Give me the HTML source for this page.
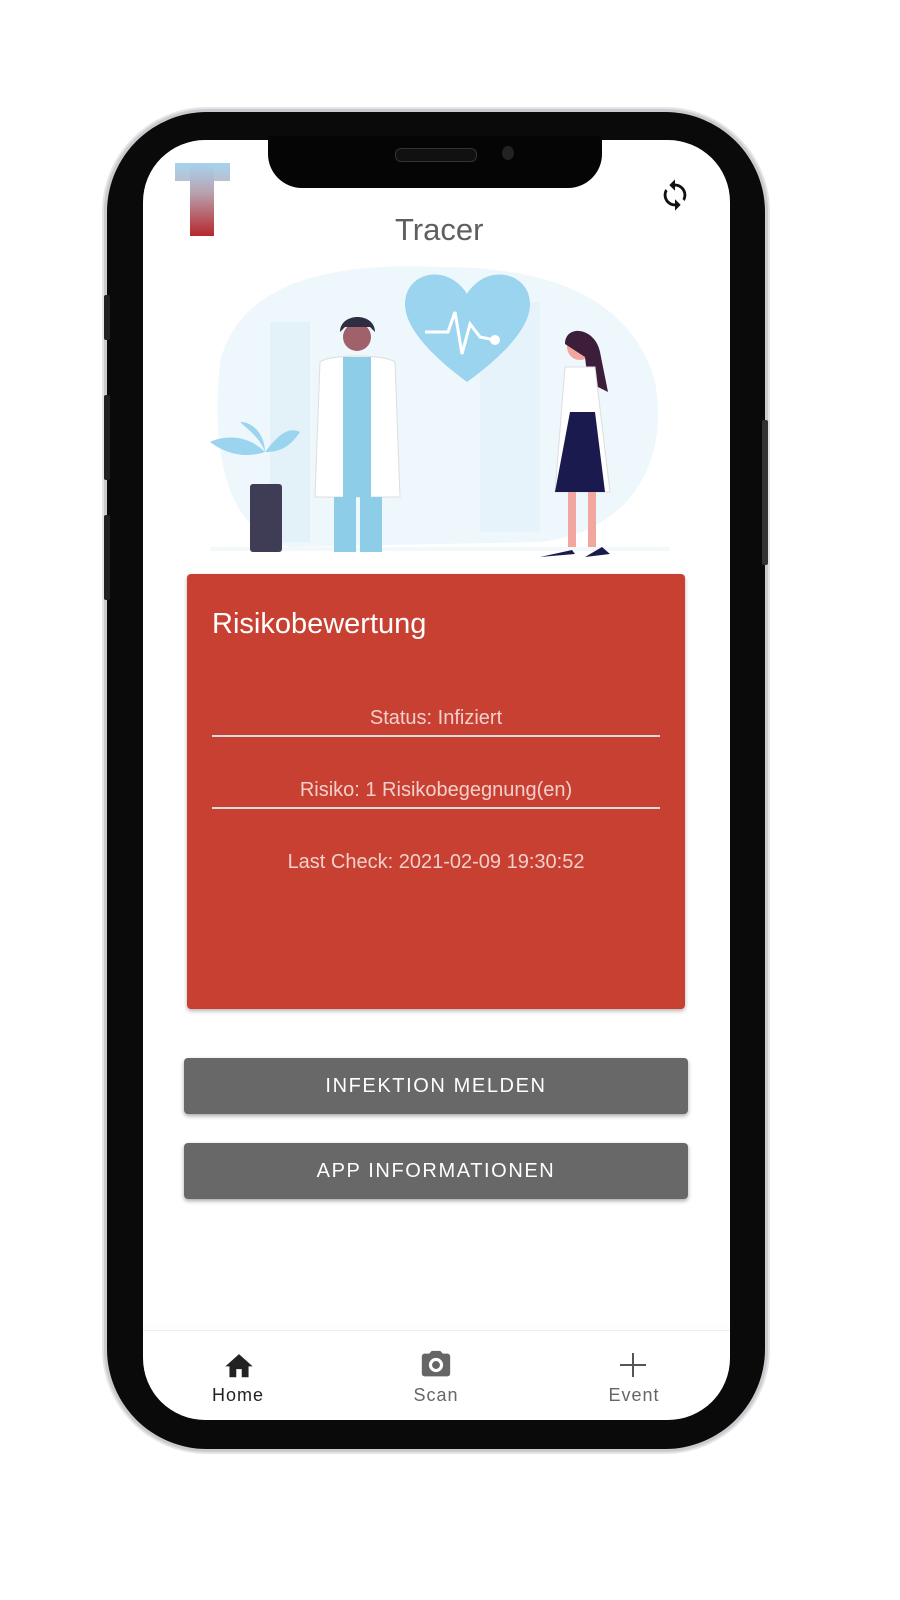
<!DOCTYPE html>
<html><head><meta charset="utf-8"><style>
body{margin:0;width:900px;height:1600px;background:#fff;position:relative;overflow:hidden;font-family:"Liberation Sans",sans-serif}
.abs{position:absolute}
.phone{left:107px;top:112px;width:658px;height:1337px;border-radius:100px;background:#0a0a0a;box-shadow:0 0 0 3px #c9cbce,0 0 0 5px #e4e5e7}
.screen{left:143px;top:140px;width:587px;height:1280px;border-radius:62px;background:#fff;overflow:hidden}
.notch{left:268px;top:136px;width:334px;height:52px;background:#050505;border-radius:0 0 34px 34px}
.card{left:187px;top:574px;width:498px;height:435px;background:#c84032;border-radius:4px;box-shadow:0 2px 4px rgba(0,0,0,.3);color:#fff}
.btn{left:184px;width:504px;height:56px;background:#686868;border-radius:4px;color:#fff;font-size:20px;letter-spacing:1.6px;text-align:center;line-height:56px;box-shadow:0 2px 4px rgba(0,0,0,.35)}
.line{left:25px;width:448px;height:2px;background:#ddd}
.row{left:0;width:498px;text-align:center;font-size:20px;color:#f3d0cc}
.nav{font-size:18px;letter-spacing:1px;text-align:center;width:120px}
</style></head><body>
<div class="abs phone"></div>
<div class="abs" style="left:104px;top:295px;width:6px;height:45px;background:#222;border-radius:2px"></div>
<div class="abs" style="left:104px;top:395px;width:6px;height:85px;background:#222;border-radius:2px"></div>
<div class="abs" style="left:104px;top:515px;width:6px;height:85px;background:#222;border-radius:2px"></div>
<div class="abs" style="left:762px;top:420px;width:6px;height:145px;background:#333;border-radius:2px"></div>
<div class="abs screen">
  <div class="abs" style="left:0;top:1190px;width:587px;height:1px;background:#eee;box-shadow:0 -3px 6px rgba(0,0,0,.06)"></div>
</div>
<div class="abs notch"></div>
<div class="abs" style="left:395px;top:148px;width:80px;height:12px;border-radius:6px;background:#111;border:1px solid #333"></div>
<div class="abs" style="left:502px;top:146px;width:12px;height:14px;border-radius:50%;background:#222"></div>
<!-- logo -->
<div class="abs" style="left:175px;top:163px;width:55px;height:18px;background:linear-gradient(#a6d3ef,#b9bfd0)"></div>
<div class="abs" style="left:190px;top:163px;width:24px;height:73px;background:linear-gradient(#a6d3ef,#b8a3b0 40%,#b7282c)"></div>
<svg class="abs" style="left:655px;top:178px" width="40" height="34" viewBox="0 0 24 24"><path d="M12 4V1L8 5l4 4V6c3.3 0 6 2.7 6 6 0 1-.25 2-.7 2.8l1.46 1.46C19.5 15 20 13.6 20 12c0-4.4-3.6-8-8-8zm0 14c-3.3 0-6-2.7-6-6 0-1 .25-2 .7-2.8L5.24 7.74C4.5 9 4 10.4 4 12c0 4.4 3.6 8 8 8v3l4-4-4-4v3z" fill="#111"/></svg>
<div class="abs" style="left:395px;top:212px;font-size:31px;color:#5f5f5f">Tracer</div>
<!-- illustration -->
<svg class="abs" style="left:210px;top:262px" width="460" height="305" viewBox="0 0 460 305">
<path d="M10 100 C30 20 120 0 230 5 C330 5 420 30 445 120 C460 200 420 270 330 280 L80 285 C20 270 0 200 10 100Z" fill="#eef7fc"/>
<rect x="60" y="60" width="40" height="220" fill="#e3f1f9"/><rect x="270" y="40" width="60" height="230" fill="#e6f3fa"/>
<rect x="0" y="285" width="460" height="4" fill="#f3f8fb"/>
<path d="M257 120 C210 85 195 60 195 42 C195 20 215 8 235 14 C247 18 255 28 257 32 C259 28 267 18 279 14 C299 8 320 20 320 42 C320 60 305 85 257 120Z" fill="#9bd4ee"/>
<path d="M215 70 L238 70 L245 50 L252 92 L260 62 L270 75 L285 78" stroke="#fff" stroke-width="3" fill="none"/><circle cx="285" cy="78" r="5" fill="#fff"/>
<path d="M55 190 C35 170 10 175 0 180 C20 195 40 195 55 190Z" fill="#9bd4ee"/><path d="M55 190 C70 170 80 165 90 170 C80 185 70 190 55 190Z" fill="#9bd4ee"/>
<path d="M55 190 C50 175 35 165 30 160 C45 160 55 175 55 190Z" fill="#9bd4ee"/>
<rect x="40" y="222" width="32" height="68" rx="3" fill="#3f3d56"/>
<circle cx="147" cy="75" r="14" fill="#a0616a"/><path d="M130 70 C130 50 165 50 165 70 L160 65 L135 65Z" fill="#2f2e41"/>
<path d="M110 100 C120 92 175 92 185 100 L190 235 L105 235Z" fill="#fff" stroke="#ddd"/>
<rect x="133" y="95" width="28" height="140" fill="#8ecde8"/>
<rect x="124" y="235" width="22" height="55" fill="#8ecde8"/><rect x="150" y="235" width="22" height="55" fill="#8ecde8"/>
<circle cx="370" cy="85" r="13" fill="#f1a7a0"/><path d="M355 82 C355 62 385 65 390 90 L398 130 L378 120 L375 95Z" fill="#3d1e3a"/>
<path d="M355 105 L385 105 L400 230 L345 230Z" fill="#fff" stroke="#ddd"/>
<path d="M360 150 L385 150 L395 230 L345 230Z" fill="#1a1a4e"/>
<rect x="358" y="230" width="8" height="55" fill="#f1a7a0"/><rect x="378" y="230" width="8" height="55" fill="#f1a7a0"/>
<path d="M330 295 L365 292 L362 288Z M375 295 L400 292 L392 285Z" fill="#1a1a4e"/>
</svg>
<div class="abs card">
  <div class="abs" style="left:25px;top:34px;font-size:29px">Risikobewertung</div>
  <div class="abs row" style="top:133px">Status: Infiziert</div>
  <div class="abs line" style="top:161px"></div>
  <div class="abs row" style="top:205px">Risiko: 1 Risikobegegnung(en)</div>
  <div class="abs line" style="top:233px"></div>
  <div class="abs row" style="top:277px">Last Check: 2021-02-09 19:30:52</div>
</div>
<div class="abs btn" style="top:1058px">INFEKTION MELDEN</div>
<div class="abs btn" style="top:1143px">APP INFORMATIONEN</div>
<svg class="abs" style="left:222px;top:1350px" width="34" height="30" viewBox="0 0 24 22"><path d="M10 20v-6h4v6h5v-8h3L12 3 2 12h3v8z" fill="#222"/></svg>
<div class="abs nav" style="left:178px;top:1385px;color:#222">Home</div>
<svg class="abs" style="left:418px;top:1348px" width="36" height="34" viewBox="0 0 24 24"><path d="M9 2L7.2 4H4c-1.1 0-2 .9-2 2v12c0 1.1.9 2 2 2h16c1.1 0 2-.9 2-2V6c0-1.1-.9-2-2-2h-3.2L15 2H9zm3 15a5 5 0 110-10 5 5 0 010 10zm0-2.2a2.8 2.8 0 100-5.6 2.8 2.8 0 000 5.6z" fill="#666"/></svg>
<div class="abs nav" style="left:376px;top:1385px;color:#666">Scan</div>
<div class="abs" style="left:620px;top:1364px;width:26px;height:2px;background:#555"></div>
<div class="abs" style="left:632px;top:1353px;width:2px;height:24px;background:#555"></div>
<div class="abs nav" style="left:574px;top:1385px;color:#666">Event</div>
</body></html>
